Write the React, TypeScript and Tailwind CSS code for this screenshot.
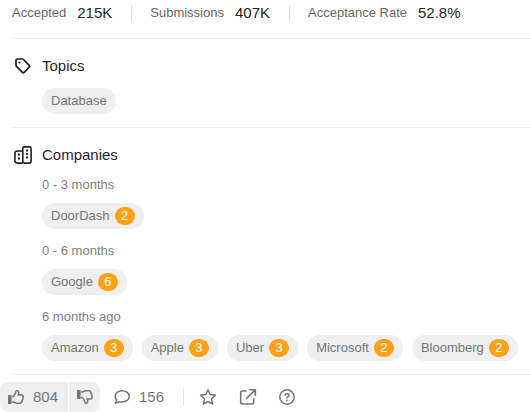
import type { ReactNode } from "react";

type Company = { name: string; count: number };

const stats = [
  { label: "Accepted", value: "215K" },
  { label: "Submissions", value: "407K" },
  { label: "Acceptance Rate", value: "52.8%" },
];

const periods: { label: string; companies: Company[] }[] = [
  { label: "0 - 3 months", companies: [{ name: "DoorDash", count: 2 }] },
  { label: "0 - 6 months", companies: [{ name: "Google", count: 6 }] },
  {
    label: "6 months ago",
    companies: [
      { name: "Amazon", count: 3 },
      { name: "Apple", count: 3 },
      { name: "Uber", count: 3 },
      { name: "Microsoft", count: 2 },
      { name: "Bloomberg", count: 2 },
    ],
  },
];

function TagIcon() {
  return (
    <svg viewBox="0 0 18 18" className="size-[18px]" fill="none" stroke="currentColor" strokeWidth="1.7" strokeLinejoin="round" aria-hidden="true">
      <path d="M2 3.3v4.9c0 .5.2.9.5 1.2l5.9 5.9c.5.5 1.3.5 1.8 0l5.1-5.1c.5-.5.5-1.3 0-1.8L9.4 2.5c-.3-.3-.7-.5-1.2-.5H3.3C2.6 2 2 2.6 2 3.3z" />
      <circle cx="5.5" cy="5.5" r="1.1" fill="currentColor" stroke="none" />
    </svg>
  );
}

function BuildingsIcon() {
  return (
    <svg viewBox="0 0 18 18" className="size-[18px]" fill="none" stroke="currentColor" strokeWidth="1.6" strokeLinejoin="round" aria-hidden="true">
      <rect x="8.8" y="0.9" width="8.3" height="16.2" rx="1.5" />
      <path d="M8.800 5H3.300C1.800 5 .9 5.900.9 7.400v7.200c0 1.500.9 2.500 2.400 2.500h5.500" />
      <path d="M12 4.500h2M12 8h2M12 11.500h2M4 8.500h2M4 12.500h2" strokeWidth="1.8" />
    </svg>
  );
}

function ThumbIcon({ down = false }: { down?: boolean }) {
  return (
    <svg viewBox="0 0 16 16" className={down ? "size-4 -scale-y-100" : "size-4"} fill="none" stroke="currentColor" strokeWidth="1.5" strokeLinejoin="round" aria-hidden="true">
      <rect x="0" y="6" width="3.6" height="9" rx="0.5" fill="currentColor" stroke="none" />
      <path d="M4 7.500h1.200c1.700-1.200 2-2.700 2.600-4.600.3-1.100.8-1.500 1.500-1.300 1.500.4 1.700 2 .7 4.500h3.700c1.400 0 2 1.200 1.100 2.300.5.800.3 1.600-.4 2.200.2.800-.1 1.500-.8 1.900.1 1.200-.7 1.800-2 1.800H9.200c-1.600 0-2.500-.7-3.600-1.300H4" />
    </svg>
  );
}

function CommentIcon() {
  return (
    <svg viewBox="0 0 16 16" className="size-4" fill="none" stroke="currentColor" strokeWidth="1.5" strokeLinejoin="round" aria-hidden="true">
      <path d="M8.200 1.700c4 0 7 2.500 7 5.700s-3 5.700-7 5.700c-1.100 0-2.100-.2-3-.5-1.100.9-2.500 1.400-4.100 1.400.9-.9 1.400-1.900 1.600-3C1.700 10 1.200 8.800 1.200 7.400c0-3.200 3-5.700 7-5.700z" />
    </svg>
  );
}

function StarIcon() {
  return (
    <svg viewBox="0 0 18 18" className="size-[18px]" fill="none" stroke="currentColor" strokeWidth="1.5" strokeLinejoin="round" aria-hidden="true">
      <path d="M9 1.700l2.200 4.900 5.200.6-3.900 3.600 1.100 5.300L9 13.500l-4.600 2.600 1.100-5.300-3.900-3.600 5.200-.6z" />
    </svg>
  );
}

function ShareIcon() {
  return (
    <svg viewBox="0 0 18 18" className="size-[18px]" fill="none" stroke="currentColor" strokeWidth="1.6" strokeLinejoin="round" strokeLinecap="round" aria-hidden="true">
      <path d="M7 3H3.300C2.300 3 1.700 3.600 1.700 4.600v9.800c0 1 .6 1.600 1.600 1.600h9.800c1 0 1.600-.6 1.600-1.600V11" />
      <path d="M10.700 1.700h5.600v5.500M16 2L7.500 10.500" />
    </svg>
  );
}

function HelpIcon() {
  return (
    <svg viewBox="1 1 16 16" className="size-4" fill="none" stroke="currentColor" strokeWidth="1.5" strokeLinecap="round" strokeLinejoin="round" aria-hidden="true">
      <circle cx="9" cy="9" r="7.2" />
      <path d="M7 7.200C7.200 5.300 11 5.300 11 7.400c0 1.300-2 1.300-2 2.500" />
      <circle cx="9" cy="12.4" r="0.9" fill="currentColor" stroke="none" />
    </svg>
  );
}

function Chip({ name, count }: { name: string; count?: number }) {
  return (
    <a href="#" className="flex h-[26px] items-center gap-[5px] rounded-full bg-[#efefef] px-[9px] text-[13px] text-[#757575]">
      {name}
      {count !== undefined && (
        <span className="flex h-[18px] w-5 items-center justify-center rounded-full bg-[#ffa116] text-white">{count}</span>
      )}
    </a>
  );
}

function Section({ icon, title, children }: { icon: ReactNode; title: string; children: ReactNode }) {
  return (
    <section className="border-t border-[#efefef] pt-[15px] pb-[13px]">
      <h2 className="flex h-6 items-center gap-[10px] pl-0.5 text-[15px] text-[#1f1f1f]">
        {icon}
        {title}
      </h2>
      <div className="pl-[30px]">{children}</div>
    </section>
  );
}

export default function App() {
  return (
    <div className="overflow-hidden bg-white font-['Liberation_Sans',Arial,sans-serif]">
      <main className="pl-3">
        <dl className="flex items-center pt-[3px] pb-[15px] whitespace-nowrap">
          {stats.map((s, i) => (
            <div key={s.label} className="flex h-5 items-center">
              {i > 0 && <span className="mr-[18px] ml-[19px] h-4 w-px bg-[#dedede]" />}
              <dt className="text-[13px] text-[#666]">{s.label}</dt>
              <dd className="ml-[11px] text-[15px] text-[#262626]">{s.value}</dd>
            </div>
          ))}
        </dl>
        <Section icon={<TagIcon />} title="Topics">
          <div className="flex pt-[10px]">
            <Chip name="Database" />
          </div>
        </Section>
        <Section icon={<BuildingsIcon />} title="Companies">
          <div className="flex flex-col gap-3 pt-2">
            {periods.map((p) => (
              <div key={p.label} className="flex flex-col gap-2">
                <h3 className="text-[13px] leading-5 text-[#808080]">{p.label}</h3>
                <div className="flex gap-[9px]">
                  {p.companies.map((c) => (
                    <Chip key={c.name} name={c.name} count={c.count} />
                  ))}
                </div>
              </div>
            ))}
          </div>
        </Section>
        <div className="h-px bg-[#efefef]" />
      </main>
      <footer className="flex h-[37px] items-center pt-[7px] text-[15px] text-[#757575]">
        <div className="flex h-[30px] gap-px overflow-hidden rounded-lg">
          <button type="button" aria-label="Like, 804" className="flex w-[68px] items-center gap-[9px] bg-[#efefef] pl-2">
            <ThumbIcon />
            804
          </button>
          <button type="button" aria-label="Dislike" className="flex w-[31px] items-center justify-center bg-[#efefef]">
            <ThumbIcon down />
          </button>
        </div>
        <button type="button" aria-label="Comments, 156" className="ml-[14px] flex items-center gap-[9px]">
          <CommentIcon />
          156
        </button>
        <span className="mr-[15px] ml-[19px] h-[18px] w-px bg-[#e5e5e5]" />
        <div className="flex items-center gap-[22px]">
          <button type="button" aria-label="Favorite"><StarIcon /></button>
          <button type="button" aria-label="Share"><ShareIcon /></button>
          <button type="button" aria-label="Help"><HelpIcon /></button>
        </div>
      </footer>
    </div>
  );
}
